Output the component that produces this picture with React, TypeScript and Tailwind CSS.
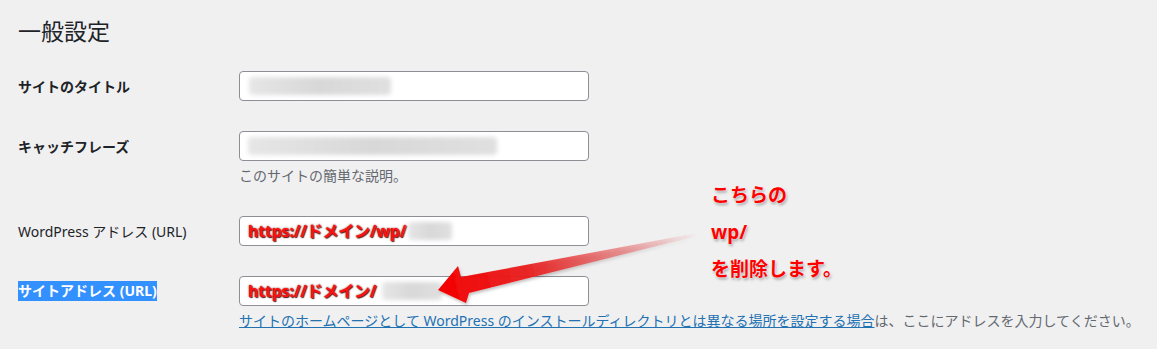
import React from "react";

const font = { fontFamily: '"Noto Sans", "Noto Sans CJK JP", sans-serif' };

function Blur({ w, className = "" }: { w: number; className?: string }) {
  return (
    <div
      className={"h-[18px] rounded-sm bg-gradient-to-r from-[#e6e6e6] via-[#d8d8d8] to-[#e0e0e0] blur-[2px] " + className}
      style={{ width: w }}
    />
  );
}

function RedUrl({ text }: { text: string }) {
  return (
    <span
      className="text-[16px] font-bold text-[#ff1010] tracking-[-0.2px] leading-none"
      style={{ textShadow: "1px 1px 1px #5a1a1a, 0 0 2px #7a2a2a" }}
    >
      {text}
    </span>
  );
}

export default function App() {
  return (
    <div className="relative w-[1157px] h-[349px] bg-[#f0f0f1] text-[#1d2327] overflow-hidden" style={font}>
      <div className="pl-[18px] pt-[15px]">
        <h1 className="text-[23px] leading-[32px] font-normal text-[#1d2327]">一般設定</h1>

        <div className="mt-[24px] flex items-center h-[30px]">
          <div className="w-[221px] text-[14px] font-bold">サイトのタイトル</div>
          <div className="w-[350px] h-[30px] bg-white border border-[#8c8f94] rounded-[4px] flex items-center pl-[9px]">
            <Blur w={142} />
          </div>
        </div>

        <div className="mt-[30px] flex items-start">
          <div className="w-[221px] h-[30px] flex items-center text-[14px] font-bold">キャッチフレーズ</div>
          <div>
            <div className="w-[350px] h-[30px] bg-white border border-[#8c8f94] rounded-[4px] flex items-center pl-[8px]">
              <Blur w={249} />
            </div>
            <div className="mt-[5px] text-[14px] leading-[20px] text-[#646970]">このサイトの簡単な説明。</div>
          </div>
        </div>

        <div className="mt-[30px] flex items-center h-[30px]">
          <div className="w-[221px] text-[14px]">WordPress アドレス (URL)</div>
          <div className="w-[350px] h-[30px] bg-white border border-[#8c8f94] rounded-[4px] flex items-center pl-[8px]">
            <RedUrl text="https://ドメイン/wp/" />
            <Blur w={44} className="ml-[2px] h-[12px]" />
          </div>
        </div>

        <div className="mt-[30px] flex items-start">
          <div className="w-[221px] h-[30px] flex items-center">
            <span className="bg-[#3390ff] text-white text-[14px] font-bold px-0 leading-[20px]">サイトアドレス (URL)</span>
          </div>
          <div>
            <div className="w-[350px] h-[30px] bg-white border border-[#8c8f94] rounded-[4px] flex items-center pl-[8px]">
              <RedUrl text="https://ドメイン/" />
              <Blur w={60} className="ml-[6px] h-[12px]" />
            </div>
            <div className="mt-[5px] text-[14px] leading-[20px] text-[#646970] whitespace-nowrap">
              <span className="text-[#2271b1] underline">
                サイトのホームページとして WordPress のインストールディレクトリとは異なる場所を設定する場合
              </span>
              は、ここにアドレスを入力してください。
            </div>
          </div>
        </div>
      </div>

      <svg className="absolute left-0 top-0 pointer-events-none" width="1157" height="349">
        <defs>
          <linearGradient id="ag" x1="438" y1="290" x2="697" y2="234" gradientUnits="userSpaceOnUse">
            <stop offset="0" stopColor="#f40000" stopOpacity="1" />
            <stop offset="0.35" stopColor="#e82020" stopOpacity="0.95" />
            <stop offset="1" stopColor="#e03030" stopOpacity="0" />
          </linearGradient>
          <filter id="sh" x="-10%" y="-20%" width="120%" height="140%">
            <feDropShadow dx="1" dy="2" stdDeviation="1.5" floodColor="#000" floodOpacity="0.25" />
          </filter>
        </defs>
        <polygon
          points="438,290 458,266 461,277 697,233 697,236 469,293 466,303"
          fill="url(#ag)"
          filter="url(#sh)"
        />
      </svg>

      <div
        className="absolute left-[711px] top-[177px] text-[19px] font-bold text-[#ff0000] leading-[37px]"
        style={{ textShadow: "0 0 2px #fff, 1px 2px 3px rgba(0,0,0,0.35)" }}
      >
        <div>こちらの</div>
        <div>wp/</div>
        <div>を削除します。</div>
      </div>
    </div>
  );
}
